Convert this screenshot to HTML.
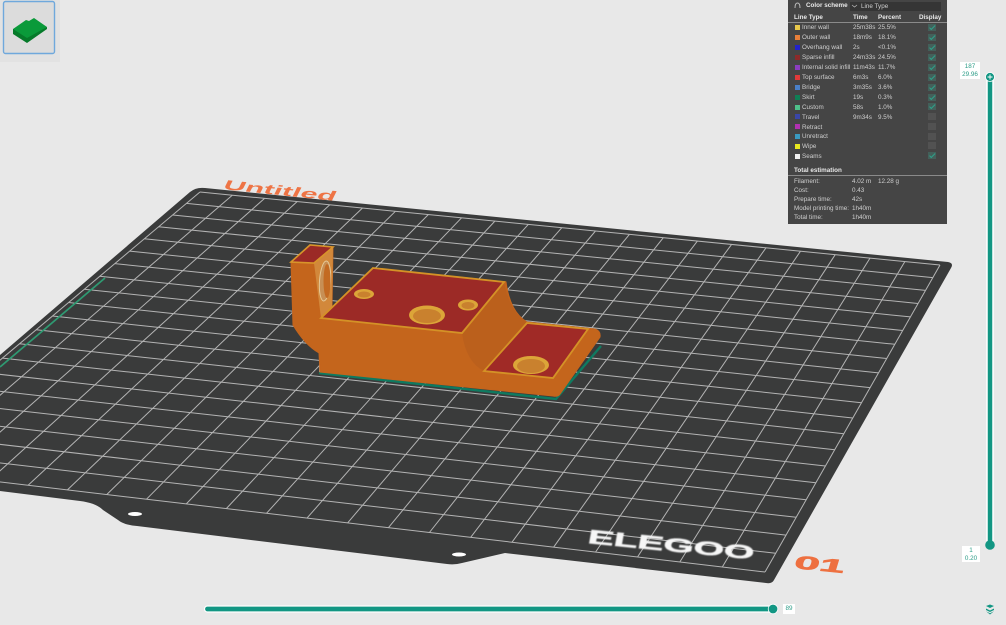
<!DOCTYPE html>
<html><head><meta charset="utf-8">
<style>
html,body{margin:0;padding:0;background:#e8e8e8;}
#root{position:relative;width:1006px;height:625px;overflow:hidden;background:#e8e8e8;font-family:"Liberation Sans",sans-serif;}
svg{position:absolute;left:0;top:0;}
.t{position:absolute;font-size:6.3px;line-height:8px;margin-top:2px;color:#cfcfcf;white-space:nowrap;filter:blur(.3px);}
.b{font-weight:bold;color:#e8e8e8;}
.sq{position:absolute;left:795px;width:5px;height:5px;}
.cb{position:absolute;left:928px;width:8px;height:7px;background:#525252;}
.on{background:#43605a;}
.on::after{content:"";position:absolute;left:3px;top:0;width:2px;height:4.500px;border:solid #2fa08a;border-width:0 1.2px 1.2px 0;transform:rotate(45deg);}
.lab{position:absolute;background:#fff;color:#2b9c87;font-size:6.300px;line-height:7.500px;text-align:center;filter:blur(.2px);}
</style></head><body>
<div id="root">
<svg width="1006" height="625" viewBox="0 0 1006 625">
<defs><clipPath id="pc"><path d="M-40,526 L0,491 L80,501 Q96,503 103,510 L118,520 Q124,525 137,526 L447,564 Q455,565 462,563 L505,553 L766,583 Q772,584 774,580 L951,268 Q954,263 948,262 L205,188 Q196,187 190,192 L-40,390Z"/></clipPath>
<filter id="bl"><feGaussianBlur stdDeviation=".35"/></filter>
<filter id="bl2"><feGaussianBlur stdDeviation=".6"/></filter></defs>
<path d="M0,491 L80,501 Q96,503 103,510 L118,520 Q124,525 137,526 L447,564 Q455,565 462,563 L505,553 L766,583 Q772,584 774,580 L951,268 Q954,263 948,262 L205,188 Q196,187 190,192 L0,355Z" fill="#3a3b3b"/>
<g id="grid" clip-path="url(#pc)" stroke="#b4b4b4" stroke-width="1" fill="none" filter="url(#bl)"></g>
<path d="M0,367 L105,278" stroke="#2f9a72" stroke-width="1.800" fill="none"/>
<ellipse cx="135" cy="514" rx="7" ry="2" fill="#fff"/>
<ellipse cx="459" cy="554.500" rx="7" ry="2" fill="#fff"/>
<text transform="matrix(1,.105,-.5,1,222,189)" font-family="Liberation Sans" font-weight="bold" font-size="13" fill="#ee7445" textLength="112" lengthAdjust="spacingAndGlyphs">Untitled</text>
<text transform="matrix(1,.1,-.18,1,587,543)" font-family="Liberation Sans" font-weight="bold" font-size="19" fill="#f6f6f6" stroke="#f6f6f6" stroke-width=".5" textLength="166" lengthAdjust="spacingAndGlyphs" filter="url(#bl2)">ELEGOO</text>
<text transform="matrix(1,.1,-.3,1,793,568)" font-family="Liberation Sans" font-weight="bold" font-size="18" fill="#ee7040" stroke="#ee7040" stroke-width=".6" textLength="50" lengthAdjust="spacingAndGlyphs">01</text>
<!-- skirt -->
<path d="M319,373 L556,399 L601,346" fill="none" stroke="#0f7a60" stroke-width="2.400"/>
<path d="M320,362V372" stroke="#fff" stroke-width="1.500"/>
<g filter="url(#bl)">
<!-- model body -->
<path d="M291,262 L310,245 L333,247 L332,307 L373,268 L506,282 Q510,312 527,322 L595,329 Q601,331 600,337 L560,394 Q558,397 553,396 L320,372 L319,353 Q305,345 293,325Z" fill="#c4651f" stroke="#c4651f"/>
<path d="M314,263 L333,247 L332,307 L321,318Z" fill="#d2883a"/>
<ellipse cx="325" cy="281" rx="5.500" ry="20" transform="rotate(4 325 281)" fill="#c78f55" stroke="#e5c896"/>
<ellipse cx="327" cy="281" rx="3.500" ry="17" fill="#c36b24"/>
<path d="M291,262 L310,245 L333,247 L314,263Z" fill="#9b2b25" stroke="#d8952c" stroke-width="1.600"/>
<path d="M462,333 L504,282 Q510,312 527,322 L484,371 Q466,362 462,333Z" fill="#bb601f"/>
<path d="M373,268 L504,282 L462,333 L321,318Z" fill="#9c2a28" stroke="#d49226" stroke-width="1.800"/>
<path d="M527,323 L588,329 L553,378 L484,371Z" fill="#a02b27" stroke="#d49226" stroke-width="1.800"/>
<ellipse cx="427" cy="315" rx="18" ry="9.500" fill="#dca539"/><ellipse cx="427" cy="316" rx="14" ry="7" fill="#c9812e"/>
<ellipse cx="364" cy="294" rx="10" ry="5" fill="#dca539"/><ellipse cx="364" cy="294.500" rx="6.500" ry="3" fill="#c9812e"/>
<ellipse cx="468" cy="305" rx="10" ry="5.500" fill="#dca539"/><ellipse cx="468" cy="305.500" rx="6.500" ry="3.500" fill="#c9812e"/>
<ellipse cx="531" cy="365" rx="18" ry="9" fill="#dca539"/><ellipse cx="531" cy="366" rx="14" ry="7" fill="#c9812e"/>
</g>
<!-- thumbnail -->
<rect x="0" y="0" width="60" height="62" fill="#e2e2e2"/>
<rect x="3.500" y="1.500" width="51" height="52" rx="2" fill="#dcdcdc" stroke="#6fa8dc" stroke-width="1.400"/>
<path d="M13,29 L26,20 L29,21 L34,18 L47,27 L27,42 L13,33Z" fill="#0a9a3a"/>
<path d="M13,29 L27,38 L47,27 L47,29 L27,43 L13,34Z" fill="#067a2a"/>
<!-- sliders -->
<rect x="987" y="77" width="6" height="468" fill="#129683" stroke="#fff" stroke-width="1.500"/>
<circle cx="990" cy="77" r="4.500" fill="#129683" stroke="#fff" stroke-width=".8"/>
<path d="M987.500,77H992.500M990,74.500V79.500" stroke="#fff" stroke-width=".9"/>
<circle cx="990" cy="545" r="4.800" fill="#129683"/>
<rect x="204.500" y="606" width="568" height="6" rx="3" fill="#129683" stroke="#fff" stroke-width="1.200"/>
<circle cx="773" cy="609" r="4.800" fill="#129683" stroke="#fff" stroke-width=".8"/>
<path d="M986,606 L990,604.500 L994,606 L990,608Z M986,608.500 L990,610.500 L994,608.500 L994,610 L990,612 L986,610Z M986,611.200 L990,613.200 L994,611.200 L990,614.500Z" fill="#129683"/>
</svg>
<!-- panel -->
<div style="position:absolute;left:788px;top:0;width:159px;height:224px;background:#454545;"></div>
<div style="position:absolute;left:850px;top:2px;width:91px;height:9px;background:#353535;"></div>
<div style="position:absolute;left:788px;top:22px;width:159px;height:1px;background:#8a8a8a;"></div>
<div style="position:absolute;left:788px;top:175px;width:159px;height:1px;background:#8a8a8a;"></div>
<svg width="1006" height="30" viewBox="0 0 1006 30"><path d="M795,8 Q795,3 797.500,3 Q800,3 800,8" fill="none" stroke="#bbb" stroke-width="1"/><path d="M852,5 L854.500,7 L857,5" fill="none" stroke="#bbb" stroke-width=".7"/></svg>
<div class="t b" style="left:806px;top:0px;">Color scheme</div>
<div class="t" style="left:861px;top:1px;">Line Type</div>
<div class="t b" style="left:794px;top:12px;">Line Type</div>
<div class="t b" style="left:853px;top:12px;">Time</div>
<div class="t b" style="left:878px;top:12px;">Percent</div>
<div class="t b" style="left:919px;top:12px;">Display</div>

<div class="sq" style="top:25px;background:#e8c84a"></div><div class="t" style="left:802px;top:22px;">Inner wall</div><div class="t" style="left:853px;top:22px;">25m38s</div><div class="t" style="left:878px;top:22px;">25.5%</div>
<div class="sq" style="top:35px;background:#e87f3a"></div><div class="t" style="left:802px;top:32px;">Outer wall</div><div class="t" style="left:853px;top:32px;">18m9s</div><div class="t" style="left:878px;top:32px;">18.1%</div>
<div class="sq" style="top:45px;background:#2222cc"></div><div class="t" style="left:802px;top:42px;">Overhang wall</div><div class="t" style="left:853px;top:42px;">2s</div><div class="t" style="left:878px;top:42px;">&lt;0.1%</div>
<div class="sq" style="top:55px;background:#8c2a2a"></div><div class="t" style="left:802px;top:52px;">Sparse infill</div><div class="t" style="left:853px;top:52px;">24m33s</div><div class="t" style="left:878px;top:52px;">24.5%</div>
<div class="sq" style="top:65px;background:#8a3ec0"></div><div class="t" style="left:802px;top:62px;">Internal solid infill</div><div class="t" style="left:853px;top:62px;">11m43s</div><div class="t" style="left:878px;top:62px;">11.7%</div>
<div class="sq" style="top:75px;background:#e03a3a"></div><div class="t" style="left:802px;top:72px;">Top surface</div><div class="t" style="left:853px;top:72px;">6m3s</div><div class="t" style="left:878px;top:72px;">6.0%</div>
<div class="sq" style="top:85px;background:#4a80c8"></div><div class="t" style="left:802px;top:82px;">Bridge</div><div class="t" style="left:853px;top:82px;">3m35s</div><div class="t" style="left:878px;top:82px;">3.6%</div>
<div class="sq" style="top:95px;background:#0f7f55"></div><div class="t" style="left:802px;top:92px;">Skirt</div><div class="t" style="left:853px;top:92px;">19s</div><div class="t" style="left:878px;top:92px;">0.3%</div>
<div class="sq" style="top:104.500px;background:#4fc08a"></div><div class="t" style="left:802px;top:102px;">Custom</div><div class="t" style="left:853px;top:102px;">58s</div><div class="t" style="left:878px;top:102px;">1.0%</div>
<div class="sq" style="top:114px;background:#3a46a8"></div><div class="t" style="left:802px;top:111.500px;">Travel</div><div class="t" style="left:853px;top:111.500px;">9m34s</div><div class="t" style="left:878px;top:111.500px;">9.5%</div>
<div class="sq" style="top:124px;background:#b030b0"></div><div class="t" style="left:802px;top:121.500px;">Retract</div>
<div class="sq" style="top:134px;background:#3a9ac0"></div><div class="t" style="left:802px;top:131px;">Unretract</div>
<div class="sq" style="top:144px;background:#e8e820"></div><div class="t" style="left:802px;top:141px;">Wipe</div>
<div class="sq" style="top:154px;background:#f0f0f0"></div><div class="t" style="left:802px;top:151px;">Seams</div>

<div class="cb on" style="top:24px;"></div><div class="cb on" style="top:34px;"></div><div class="cb on" style="top:44px;"></div><div class="cb on" style="top:54px;"></div><div class="cb on" style="top:64px;"></div><div class="cb on" style="top:74px;"></div><div class="cb on" style="top:84px;"></div><div class="cb on" style="top:94px;"></div><div class="cb on" style="top:103px;"></div><div class="cb" style="top:113px;"></div><div class="cb" style="top:123px;"></div><div class="cb" style="top:133px;"></div><div class="cb" style="top:142px;"></div><div class="cb on" style="top:152px;"></div>

<div class="t b" style="left:794px;top:165px;">Total estimation</div>
<div class="t" style="left:794px;top:176px;">Filament:</div><div class="t" style="left:852px;top:176px;">4.02 m</div><div class="t" style="left:878px;top:176px;">12.28 g</div>
<div class="t" style="left:794px;top:185px;">Cost:</div><div class="t" style="left:852px;top:185px;">0.43</div>
<div class="t" style="left:794px;top:194px;">Prepare time:</div><div class="t" style="left:852px;top:194px;">42s</div>
<div class="t" style="left:794px;top:203px;">Model printing time:</div><div class="t" style="left:852px;top:203px;">1h40m</div>
<div class="t" style="left:794px;top:212px;">Total time:</div><div class="t" style="left:852px;top:212px;">1h40m</div>

<div class="lab" style="left:960px;top:62px;width:20px;height:17px;padding-top:1px;box-sizing:border-box;">187<br>29.96</div>
<div class="lab" style="left:962px;top:546px;width:18px;height:16px;padding-top:1px;box-sizing:border-box;">1<br>0.20</div>
<div class="lab" style="left:783px;top:604px;width:12px;height:10px;line-height:10px;">89</div>
</div>
<script>
(function(){
var g=-0.04306,h=-0.17885,a=699.5,b=-304.3,c=200,d=61.59,e=191.48,f=192;
function P(u,v){var w=g*u+h*v+1;return [((a*u+b*v+c)/w).toFixed(1),((d*u+e*v+f)/w).toFixed(1)];}
function L(p,q){return '<line x1="'+p[0]+'" y1="'+p[1]+'" x2="'+q[0]+'" y2="'+q[1]+'"/>';}
var NU=22,NV=20,s="",i;
for(i=0;i<=NU;i++){s+=L(P(i/NU,0),P(i/NU,1));}
for(i=0;i<=NV;i++){s+=L(P(0,i/NV),P(1,i/NV));}
document.getElementById("grid").innerHTML=s;
})();
</script>
</body></html>
